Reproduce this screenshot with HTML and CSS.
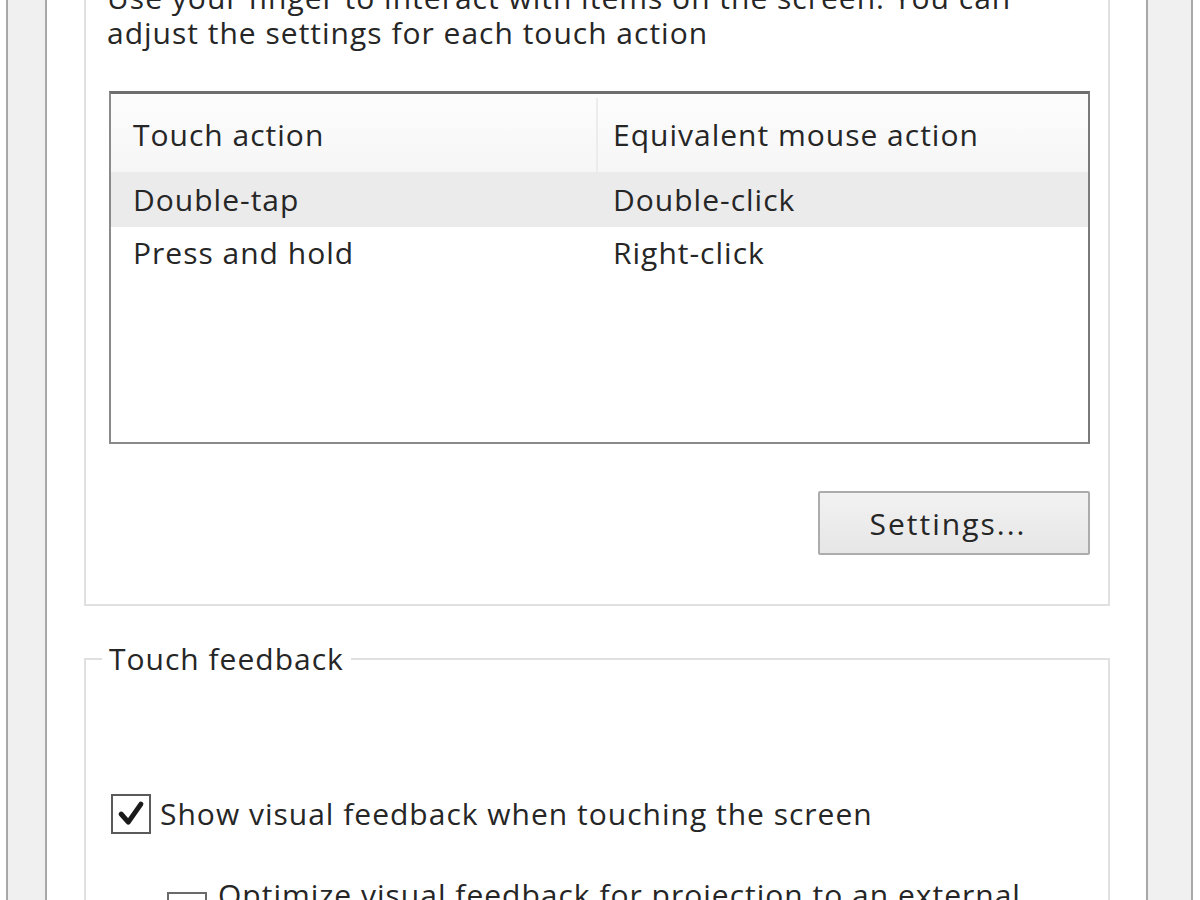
FILE: index.html
```html
<!DOCTYPE html>
<html lang="en">
<head>
<meta charset="utf-8">
<title>Pen and Touch</title>
<link rel="stylesheet" href="styles.css">
</head>
<body>
<div class="frame">
  <div class="window">
    <div class="group group-actions">
      <p class="desc">Use your finger to interact with items on the screen. You can<br>adjust the settings for each touch action</p>
      <div class="listbox">
        <div class="list-head">
          <div class="col col-a">Touch action</div>
          <div class="col col-b">Equivalent mouse action</div>
        </div>
        <div class="list-row selected">
          <div class="col col-a">Double-tap</div>
          <div class="col col-b">Double-click</div>
        </div>
        <div class="list-row">
          <div class="col col-a">Press and hold</div>
          <div class="col col-b">Right-click</div>
        </div>
      </div>
      <div class="btn-row">
        <button class="btn">Settings...</button>
      </div>
    </div>
    <fieldset class="group group-feedback">
      <legend>Touch feedback</legend>
      <label class="check-row">
        <span class="check checked">
          <svg viewBox="0 0 40 40" width="36" height="36"><path d="M9 20 L17 29 L31 9" fill="none" stroke="#1a1a1a" stroke-width="5.5" stroke-linecap="round" stroke-linejoin="round"/></svg>
        </span>
        <span class="check-label">Show visual feedback when touching the screen</span>
      </label>
      <label class="check-row sub">
        <span class="check"></span>
        <span class="check-label">Optimize visual feedback for projection to an external display</span>
      </label>
    </fieldset>
  </div>
</div>
</body>
</html>
```
FILE: styles.css
```css
html, body {
  margin: 0;
  padding: 0;
  background: #ffffff;
  overflow: hidden;
  height: 900px;
}

body {
  font-family: "Open Sans", "Liberation Sans", sans-serif;
  font-size: 30px;
  letter-spacing: 1px;
  color: #262626;
}

.frame {
  margin: 0 7px 0 6px;
  height: 900px;
  box-sizing: border-box;
  border-left: 2px solid #a8a8a8;
  border-right: 2px solid #a8a8a8;
  background: #f0f0f0;
  padding: 0 43px 0 37px;
}

.window {
  height: 900px;
  box-sizing: border-box;
  overflow: hidden;
  border-left: 2px solid #a8a8a8;
  border-right: 2px solid #a8a8a8;
  background: #ffffff;
  padding: 0 36px 0 37px;
}

.group {
  border: 2px solid #e0e0e0;
}

.group-actions {
  border-top: none;
  margin-top: -20px;
  padding: 0 18px 49px 21px;
}

.desc {
  margin: 0;
  line-height: 35px;
  white-space: nowrap;
}

.listbox {
  margin: 41px 0 0 2px;
  height: 348px;
  border: 2px solid #8a8a8a;
  border-top: 3px solid #6e6e6e;
  border-right-color: #7a7a7a;
  background: #ffffff;
}

.list-head {
  display: flex;
  height: 78px;
  box-sizing: border-box;
  padding-top: 4px;
  background: linear-gradient(#fdfdfd, #f6f6f6);
}

.list-head .col {
  display: flex;
  align-items: center;
}

.list-head .col-a {
  border-right: 2px solid #ececec;
}

.list-row {
  display: flex;
  height: 52px;
  align-items: center;
}

.list-row.selected {
  height: 55px;
  background: #ebebeb;
}

.col {
  line-height: 36px;
}

.col-a {
  width: 463px;
  padding-left: 22px;
}

.list-row .col-a {
  width: 465px;
}

.col-b {
  padding-left: 15px;
}

.btn-row {
  display: flex;
  justify-content: flex-end;
  margin-top: 47px;
}

.btn {
  width: 272px;
  height: 64px;
  border: 2px solid #acacac;
  border-radius: 2px;
  background: linear-gradient(#f2f2f2, #e6e6e6);
  font-family: inherit;
  font-size: 30px;
  letter-spacing: 2px;
  color: #262626;
  padding: 0 12px 0 0;
}

.group-feedback {
  margin: 35px 0 0 0;
  padding: 0;
  min-width: 0;
  border-bottom: none;
  height: 400px;
}

.group-feedback legend {
  margin-left: 16px;
  padding: 0 7px;
  line-height: 36px;
}

.check-row {
  display: flex;
  align-items: center;
  gap: 9px;
  margin: 117px 0 0 25px;
}

.check {
  width: 36px;
  height: 36px;
  border: 2px solid #5a5a5a;
  background: #ffffff;
  flex: none;
  display: flex;
  align-items: center;
  justify-content: center;
}

.check svg {
  display: block;
}

.check-label {
  line-height: 36px;
  white-space: nowrap;
}

.check-row.sub {
  margin-top: 43px;
  margin-left: 81px;
  gap: 11px;
}

.check-row.sub .check {
  border-color: #6a6a6a;
}

.check-row.sub .check-label {
  white-space: normal;
  width: 830px;
  line-height: 35px;
}
```
